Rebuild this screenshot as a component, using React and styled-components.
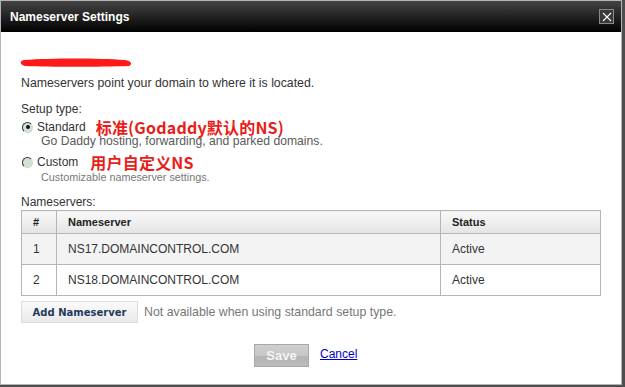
import React from "react";
import styled, { createGlobalStyle } from "styled-components";

const Global = createGlobalStyle`
  html, body { margin: 0; padding: 0; background: #4e4e4e; }
  body { font-family: "Liberation Sans", Arial, sans-serif; font-size: 12px; color: #333; }
`;

const Dialog = styled.div`
  width: 620px;
  height: 383px;
  border: 1px solid #b4b4b4;
  background: #fff;
  display: flex;
  flex-direction: column;
`;

const TitleBar = styled.div`
  height: 31px;
  flex: none;
  background: linear-gradient(#444 0%, #262626 45%, #000 100%);
  display: flex;
  align-items: center;
  justify-content: space-between;
  padding: 0 7px 0 9px;
`;

const Title = styled.div`
  color: #fff;
  font-weight: bold;
  font-size: 12px;
`;

const CloseBox = styled.div`
  width: 13px;
  height: 13px;
  border: 1px solid #8a8a8a;
  background: #3a3a3a;
  display: flex;
  align-items: center;
  justify-content: center;
`;

const Content = styled.div`
  padding: 0 20px;
  display: flex;
  flex-direction: column;
`;

const Scribble = styled.svg`
  display: block;
  margin: 23px 0 0 -4px;
`;

const Text = styled.div`
  line-height: 16px;
  font-size: ${(p) => p.size || 12}px;
  color: #333;
  margin-top: ${(p) => p.mt || 0}px;
`;

const OptionRow = styled.label`
  display: flex;
  align-items: center;
  height: 16px;
  line-height: 16px;
  font-size: 12px;
  color: #333;
  margin-top: ${(p) => p.mt || 0}px;
`;

const Radio = styled.span`
  width: 9px;
  height: 9px;
  border-radius: 50%;
  border: 1px solid;
  border-color: #2e3a30 #d0d8d0 #d0d8d0 #2e3a30;
  background: #d4e2d6;
  margin: 0 4px 0 1px;
  position: relative;
  flex: none;
  &::after {
    content: "";
    display: ${(p) => (p.checked ? "block" : "none")};
    position: absolute;
    left: 2.5px;
    top: 2.5px;
    width: 4px;
    height: 4px;
    border-radius: 50%;
    background: #111;
  }
`;

const Note = styled.span`
  font-family: "Noto Sans CJK SC", "Liberation Sans", sans-serif;
  font-size: 16px;
  font-weight: bold;
  color: #ea1c17;
  margin-left: ${(p) => p.ml}px;
  line-height: 16px;
  height: 16px;
  display: inline-flex;
  align-items: center;
  letter-spacing: 0.2px;
`;

const Desc = styled.div`
  font-size: ${(p) => p.size}px;
  line-height: 12px;
  color: ${(p) => p.color};
  padding-left: 20px;
  margin-top: ${(p) => p.mt || 0}px;
`;

const Table = styled.table`
  margin-top: 0;
  width: 580px;
  border-collapse: collapse;
  font-size: 12px;
  color: #333;
  td, th {
    border: 1px solid #b6b6b6;
    text-align: left;
    padding: 0 0 0 11px;
  }
  th {
    height: 22px;
    font-size: 11px;
    font-weight: bold;
    color: #222;
    background: linear-gradient(#f9f9f9, #e4e4e4);
  }
  td { height: 30px; }
`;

const Row = styled.tr`
  background: ${(p) => (p.alt ? "#f3f3f3" : "#fff")};
`;

const AddRow = styled.div`
  display: flex;
  align-items: center;
  margin-top: 5px;
  gap: 6px;
`;

const AddButton = styled.button`
  height: 22px;
  width: 117px;
  border: 1px solid #dcdcdc;
  background: linear-gradient(#fbfbfb, #e9e9e9);
  font-family: "DejaVu Sans", Verdana, sans-serif;
  font-weight: bold;
  font-size: 10px;
  color: #1f3b5c;
  padding: 0;
`;

const Muted = styled.span`
  color: #777;
  font-size: 12.35px;
`;

const Footer = styled.div`
  display: flex;
  align-items: center;
  margin: 21px 0 0 233px;
  gap: 11px;
`;

const SaveButton = styled.button`
  width: 55px;
  height: 23px;
  border: 1px solid #a8a8a8;
  background: linear-gradient(#cfcfcf 0%, #c6c6c6 50%, #b4b4b4 52%, #bcbcbc 100%);
  color: #f4f4f4;
  font-family: "Liberation Sans", Arial, sans-serif;
  font-weight: bold;
  font-size: 13px;
  padding: 0;
`;

const CancelLink = styled.a`
  color: #0000cc;
  text-decoration: underline;
  font-size: 12px;
  margin-top: -4px;
`;

export default function App() {
  const servers = [
    { n: 1, name: "NS17.DOMAINCONTROL.COM", status: "Active" },
    { n: 2, name: "NS18.DOMAINCONTROL.COM", status: "Active" },
  ];
  return (
    <>
      <Global />
      <Dialog>
        <TitleBar>
          <Title>Nameserver Settings</Title>
          <CloseBox>
            <svg width="10" height="10" viewBox="0 0 10 10">
              <path d="M1 1L9 9M9 1L1 9" stroke="#fff" strokeWidth="1.1" />
            </svg>
          </CloseBox>
        </TitleBar>
        <Content>
          <Scribble width="120" height="13" viewBox="0 0 120 13">
            <path
              d="M7 5 C35 3 80 3 108 5 C114 6 116 9 112 11 C82 12 34 12 8 11 C3 10 2 6 7 5Z"
              fill="#ff1a1a"
            />
          </Scribble>
          <Text mt={7} size={12.3}>
            Nameservers point your domain to where it is located.
          </Text>
          <Text mt={10}>Setup type:</Text>
          <OptionRow mt={2}>
            <Radio checked />
            Standard
            <Note ml={10}>标准(Godaddy默认的NS)</Note>
          </OptionRow>
          <Desc size={12.2} color="#5a5a5a">
            Go Daddy hosting, forwarding, and parked domains.
          </Desc>
          <OptionRow mt={7}>
            <Radio />
            Custom
            <Note ml={12}>用户自定义NS</Note>
          </OptionRow>
          <Desc mt={1} size={10.8} color="#777">
            Customizable nameserver settings.
          </Desc>
          <Text mt={11}>Nameservers:</Text>
          <Table>
            <thead>
              <tr>
                <th style={{ width: "23px" }}>#</th>
                <th>Nameserver</th>
                <th style={{ width: "148px" }}>Status</th>
              </tr>
            </thead>
            <tbody>
              {servers.map((s, i) => (
                <Row key={s.n} alt={i === 0}>
                  <td>{s.n}</td>
                  <td>{s.name}</td>
                  <td>{s.status}</td>
                </Row>
              ))}
            </tbody>
          </Table>
          <AddRow>
            <AddButton>Add Nameserver</AddButton>
            <Muted>Not available when using standard setup type.</Muted>
          </AddRow>
          <Footer>
            <SaveButton>Save</SaveButton>
            <CancelLink href="#">Cancel</CancelLink>
          </Footer>
        </Content>
      </Dialog>
    </>
  );
}
